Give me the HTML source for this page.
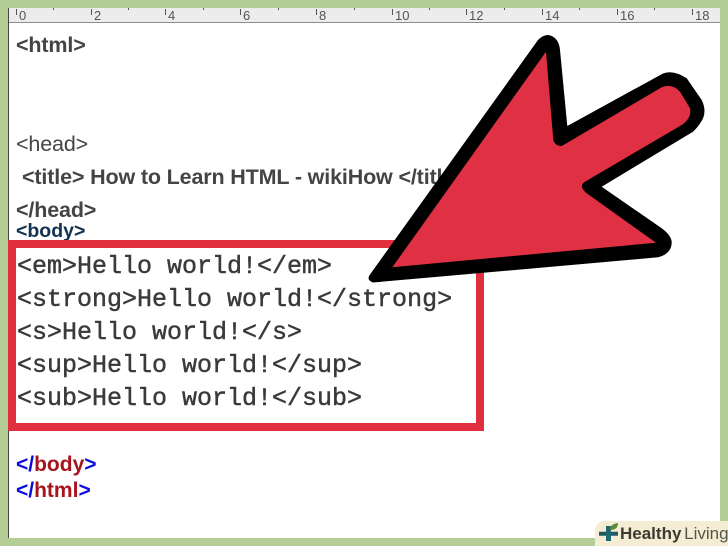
<!DOCTYPE html>
<html><head><meta charset="utf-8">
<style>
html,body{margin:0;padding:0}
body{width:728px;height:546px;overflow:hidden;background:#b5cd97;position:relative;font-family:"Liberation Sans",sans-serif}
.a{position:absolute;white-space:pre;line-height:1}
#page{position:absolute;left:9px;top:8px;width:711px;height:530px;background:#fff}
#ruler{position:absolute;left:9px;top:8px;width:711px;height:14px;background:#ececec;border-bottom:1.5px solid #8d8d8d}
#lb{position:absolute;left:8px;top:8px;width:1px;height:530px;background:#444}
.r{font-size:13px;color:#555}
.t{position:absolute;width:1px;height:6px;background:#555;top:9px}
.d{position:absolute;width:1px;height:2px;background:#555;top:8px}
.g{font-weight:bold;color:#444;font-size:21.5px;letter-spacing:-.15px}
.m{font-family:"Liberation Mono",monospace;font-size:25px;color:#3a3a3a;-webkit-text-stroke:.45px #3a3a3a}
</style></head><body>
<div id="page"></div><div id="ruler"></div><div id="lb"></div>
<i class="t" style="left:16px"></i><span class="a r" style="left:19px;top:9px">0</span>
<i class="t" style="left:91px"></i><span class="a r" style="left:94px;top:9px">2</span>
<i class="t" style="left:165px"></i><span class="a r" style="left:168px;top:9px">4</span>
<i class="t" style="left:240px"></i><span class="a r" style="left:243px;top:9px">6</span>
<i class="t" style="left:316px"></i><span class="a r" style="left:319px;top:9px">8</span>
<i class="t" style="left:392px"></i><span class="a r" style="left:395px;top:9px">10</span>
<i class="t" style="left:466px"></i><span class="a r" style="left:469px;top:9px">12</span>
<i class="t" style="left:542px"></i><span class="a r" style="left:545px;top:9px">14</span>
<i class="t" style="left:617px"></i><span class="a r" style="left:620px;top:9px">16</span>
<i class="t" style="left:692px"></i><span class="a r" style="left:695px;top:9px">18</span>
<i class="d" style="left:53px"></i><i class="d" style="left:128px"></i><i class="d" style="left:203px"></i><i class="d" style="left:278px"></i><i class="d" style="left:354px"></i><i class="d" style="left:429px"></i><i class="d" style="left:504px"></i><i class="d" style="left:579px"></i><i class="d" style="left:654px"></i>

<span class="a g" style="left:16px;top:35px">&lt;html&gt;</span>
<span class="a g" style="left:16px;top:134px;font-weight:normal">&lt;head&gt;</span>
<span class="a g" style="left:22px;top:167px">&lt;title&gt; How to Learn HTML - wikiHow &lt;/title&gt;</span>
<span class="a g" style="left:16px;top:200px">&lt;/head&gt;</span>
<span class="a" style="left:16px;top:222px;font-size:19.5px;font-weight:bold;color:#12324f;">&lt;body&gt;</span>

<div style="position:absolute;left:8px;top:240px;width:460px;height:175px;border:8px solid #e0303f"></div>
<span class="a m" style="left:17px;top:254px">&lt;em&gt;Hello world!&lt;/em&gt;</span>
<span class="a m" style="left:17px;top:287px">&lt;strong&gt;Hello world!&lt;/strong&gt;</span>
<span class="a m" style="left:17px;top:320px">&lt;s&gt;Hello world!&lt;/s&gt;</span>
<span class="a m" style="left:17px;top:353px">&lt;sup&gt;Hello world!&lt;/sup&gt;</span>
<span class="a m" style="left:17px;top:386px">&lt;sub&gt;Hello world!&lt;/sub&gt;</span>

<span class="a" style="left:16px;top:454px;font-size:21px;font-weight:bold;color:#a8141e"><span style="color:#0c0ce0">&lt;/</span>body<span style="color:#0c0ce0">&gt;</span></span>
<span class="a" style="left:16px;top:480px;font-size:21px;font-weight:bold;color:#a8141e"><span style="color:#0c0ce0">&lt;/</span>html<span style="color:#0c0ce0">&gt;</span></span>

<svg style="position:absolute;left:0;top:0" width="728" height="546" viewBox="0 0 728 546">
<path d="M373 282.500 Q366 280 370 274.500 L538 40 Q548 30 556.700 40 Q559.500 44 560 50 L567.300 126 L663 73.500 Q673 69.500 686.700 78.300 L701.700 100 Q708 113 700 123.500 Q697 128 693 131.700 L601.700 186.700 L661.700 228.300 Q672 236 671.700 243 Q671 254 658 257.300 Z" fill="#000"/>
<path d="M546 51.700 L553.300 140 Q555 146 561.700 146 L661.700 87.300 Q672 83 680 91.700 L690 108.300 Q692 118 681.700 125 L585 181.700 Q578 186 586.700 193.300 L656 242.700 L392.300 267.300 Z" fill="#e03043"/>
</svg>

<div style="position:absolute;left:595px;top:521px;width:133px;height:25px;background:#f4ecd3;border-radius:10px 0 0 0"></div>
<svg style="position:absolute;left:598px;top:522px" width="26" height="24" viewBox="0 0 26 24">
<path d="M1 11.700H20" stroke="#1f5a62" stroke-width="4" fill="none"/>
<path d="M10.500 4V19" stroke="#1f6a72" stroke-width="5" fill="none"/>
<path d="M12 8Q12 2 20 1Q20 8 12 8Z" fill="#5a8a32"/>
</svg>
<span class="a" style="left:620px;top:525px;font-size:17px;font-weight:bold;color:#3b3b33;word-spacing:-2px">Healthy <span style="font-weight:normal;color:#55554c">Living</span></span>
</body></html>
